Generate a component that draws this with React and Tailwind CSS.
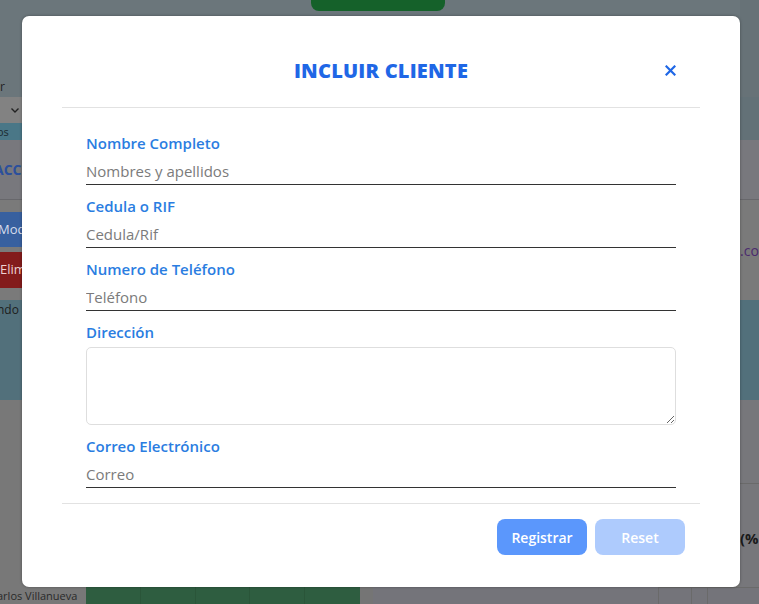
import React, { useState } from 'react';

const fieldFont = { fontFamily: '"Open Sans", "Liberation Sans", sans-serif' };

function LineInput({ label, placeholder, value, onChange, first }) {
    return (
        <div className={first ? "" : "mt-[10px]"}>
            <label className="block text-[15px] leading-[22px] font-semibold text-[#2a7de1]">{label}</label>
            <input
                value={value}
                onChange={e => onChange(e.target.value)}
                placeholder={placeholder}
                className="mt-[4px] block w-full h-[27px] border-b-[1.5px] border-[#333] outline-none bg-transparent text-[15px] text-gray-700 placeholder:text-[#7b7b7b]"
            />
        </div>
    );
}

export default function App() {
    const [form, setForm] = useState({ nombre: "", cedula: "", telefono: "", direccion: "", correo: "" });
    const set = key => v => setForm(f => ({ ...f, [key]: v }));
    const reset = () => setForm({ nombre: "", cedula: "", telefono: "", direccion: "", correo: "" });

    return (
        <div className="relative w-[759px] h-[604px] overflow-hidden bg-[#7a7a7a]" style={fieldFont}>
            {/* pagina de fondo, ya oscurecida por el overlay */}
            <div className="flex flex-col h-full text-[13px]">
                <div className="h-[97px] shrink-0 bg-[#6b767b] flex">
                    <div className="w-[22px] flex flex-col justify-end pb-[4px] text-[#222] text-[12px] leading-none">r</div>
                    <div className="flex-1 flex justify-center">
                        <div className="ml-[-6px] w-[134px] h-[11px] rounded-b-[8px] bg-[#15612a]"></div>
                    </div>
                    <div className="w-[19px] bg-[#677277]"></div>
                </div>
                <div className="h-[43px] shrink-0 flex bg-[#6b767b]">
                    <div className="w-[22px] flex flex-col">
                        <div className="h-[26px] shrink-0 bg-[#828282] flex items-center justify-end pr-[2px]">
                            <svg width="10" height="10" viewBox="0 0 10 10" fill="none" stroke="#222" strokeWidth="1.4"><path d="M1.5 3.5 5 7l3.5-3.5" /></svg>
                        </div>
                        <div className="flex-1 bg-[#4a7787] text-[#1b2a30] text-[11px] leading-[17px] -ml-[3px]">os</div>
                    </div>
                    <div className="flex-1"></div>
                    <div className="w-[19px] bg-[#637177]"></div>
                </div>
                <div className="h-[60px] shrink-0 flex bg-[#78787d] border-b border-[#67676b]">
                    <div className="w-[22px] flex items-center text-[#2b4f9c] font-bold text-[14px] -ml-[6px]">ACC</div>
                </div>
                <div className="h-[100px] shrink-0 flex bg-[#7a7a7a]">
                    <div className="w-[22px] flex flex-col pt-[12px]">
                        <div className="h-[35px] shrink-0 bg-[#38609f] text-[#d6deec] flex items-center text-[13px] -ml-[2px]">Mod</div>
                        <div className="h-[36px] shrink-0 mt-[5px] bg-[#831b1b] text-[#eed2d2] flex items-center text-[13px]">Elim</div>
                    </div>
                    <div className="flex-1"></div>
                    <div className="w-[19px] flex items-center text-[#4b2a6e] text-[14px] font-medium">.co</div>
                </div>
                <div className="h-[100px] shrink-0 bg-[#52707b] flex">
                    <div className="w-[22px] pt-[4px] text-[#1d1d1d] text-[12px] leading-[12px] -ml-[3px]">ndo</div>
                </div>
                <div className="flex-1 min-h-0 bg-[#787878] flex">
                    <div className="flex-1"></div>
                    <div className="w-[19px] flex flex-col bg-[#77777b]">
                        <div className="h-[84px] shrink-0 border-b border-[#6a6a6a]"></div>
                        <div className="h-[100px] shrink-0 pt-[8px] flex items-center font-bold text-[15px] text-[#1a1a1a]">(%</div>
                    </div>
                </div>
                <div className="h-[17px] shrink-0 flex bg-[#787878]">
                    <div className="w-[86px] overflow-hidden">
                        <div className="text-[11px] leading-[17px] text-[#2a2a2a] -ml-[3px] whitespace-nowrap">arlos Villanueva</div>
                    </div>
                    <div className="w-[274px] bg-[#2e5d40] grid grid-cols-5 divide-x divide-[#2a5539]">
                        <div></div><div></div><div></div><div></div><div></div>
                    </div>
                    <div className="w-[13px] bg-[#757575]"></div>
                    <div className="flex-1 bg-[#74747a] flex justify-end">
                        <div className="w-[101px] border-l border-t border-[#6a6a6a] grid grid-cols-[33px_16px_1fr] divide-x divide-[#6a6a6a]">
                            <div></div><div></div><div></div>
                        </div>
                    </div>
                </div>
            </div>

            {/* modal */}
            <div className="absolute inset-0 pl-[22px] pt-[16px]">
                <div className="w-[718px] h-[571px] bg-white rounded-[7px] px-10 flex flex-col shadow-[0_0_3px_rgba(0,0,0,0.35)]">
                    <div className="h-[92px] border-b border-[#e2e2e2] grid grid-cols-[1fr_auto_1fr] items-start pt-[40px]">
                        <div></div>
                        <h1 className="text-[20px] leading-[30px] font-extrabold text-[#1f67e6] tracking-[0.2px]">INCLUIR CLIENTE</h1>
                        <div className="flex justify-end pr-[24px] pt-[9px]">
                            <button className="text-[#1f67e6]">
                                <svg width="11" height="11" viewBox="0 0 11 11" stroke="currentColor" strokeWidth="2.2" strokeLinecap="square"><path d="M1.5 1.5l8 8M9.5 1.5l-8 8" /></svg>
                            </button>
                        </div>
                    </div>

                    <div className="px-6 pt-[24px] flex-1">
                        <LineInput first label="Nombre Completo" placeholder="Nombres y apellidos" value={form.nombre} onChange={set("nombre")} />
                        <LineInput label="Cedula o RIF" placeholder="Cedula/Rif" value={form.cedula} onChange={set("cedula")} />
                        <LineInput label="Numero de Teléfono" placeholder="Teléfono" value={form.telefono} onChange={set("telefono")} />
                        <div className="mt-[10px]">
                            <label className="block text-[15px] leading-[22px] font-semibold text-[#2a7de1]">Dirección</label>
                            <textarea value={form.direccion} onChange={e => set("direccion")(e.target.value)} className="mt-[4px] block w-full h-[78px] border border-[#dedede] rounded-[5px] outline-none p-2 text-[15px]"></textarea>
                        </div>
                        <LineInput label="Correo Electrónico" placeholder="Correo" value={form.correo} onChange={set("correo")} />
                    </div>

                    <div className="h-[84px] border-t border-[#e2e2e2] flex justify-end items-start pt-[15px] pr-[15px] gap-[8px]">
                        <button className="w-[90px] h-[36px] rounded-[8px] bg-[#5b97fc] text-white text-[14px] font-semibold">Registrar</button>
                        <button onClick={reset} className="w-[90px] h-[36px] rounded-[8px] bg-[#aecbfd] text-white text-[14px] font-semibold">Reset</button>
                    </div>
                </div>
            </div>
        </div>
    );
}
